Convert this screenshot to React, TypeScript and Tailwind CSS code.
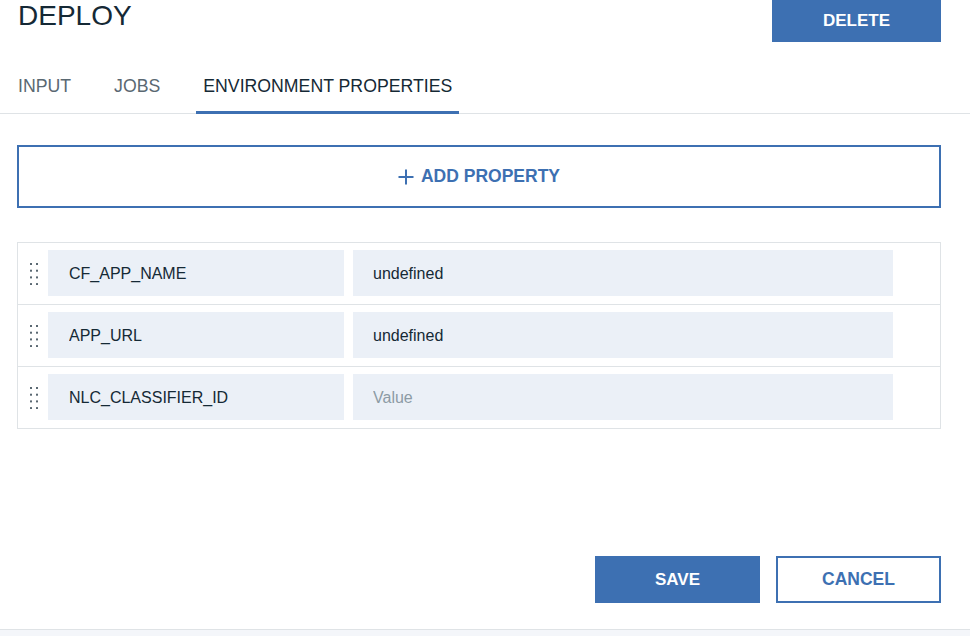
const PROPERTIES = [
  { name: "CF_APP_NAME", value: "undefined" },
  { name: "APP_URL", value: "undefined" },
  { name: "NLC_CLASSIFIER_ID", value: "" },
];

const TABS = ["INPUT", "JOBS", "ENVIRONMENT PROPERTIES"];

function DragHandle() {
  return (
    <svg width="10" height="24" viewBox="0 0 10 24" className="shrink-0">
      {[0, 1, 2, 3].map((r) =>
        [0, 1].map((c) => (
          <rect key={`${r}-${c}`} x={1 + c * 6} y={2 + r * 6.7} width="2" height="2" fill="#5a6872" />
        ))
      )}
    </svg>
  );
}

function PlusIcon() {
  return (
    <svg width="16" height="16" viewBox="0 0 16 16" className="shrink-0">
      <path d="M8 0.5v15M0.5 8h15" stroke="#3d70b2" strokeWidth="2" fill="none" />
    </svg>
  );
}

export default function App() {
  return (
    <div className="relative h-[636px] w-[970px] overflow-hidden bg-white font-['Liberation_Sans',Arial,sans-serif] text-[#152935]">
      <div className="flex items-start justify-between pl-[18px] pr-[29px]">
        <h1 className="text-[28px] leading-[32px] font-normal">DEPLOY</h1>
        <button className="h-[42px] w-[169px] bg-[#3d70b2] text-[17px] font-bold text-white">
          DELETE
        </button>
      </div>

      <div className="flex h-[72px] items-end gap-[29px] border-b border-[#dfe3e6] pl-[11px]">
        {TABS.map((tab) => {
          const active = tab === "ENVIRONMENT PROPERTIES";
          return (
            <div
              key={tab}
              className={
                active
                  ? "-mb-px border-b-[3px] border-[#3d70b2] px-[7px] pb-[13px] text-[17.7px] leading-[24px] text-[#152935]"
                  : "-mb-px border-b-[3px] border-transparent px-[7px] pb-[13px] text-[17.7px] leading-[24px] text-[#5a6872]"
              }
            >
              {tab}
            </div>
          );
        })}
      </div>

      <div className="px-[17px] pr-[29px]">
        <button className="mt-[31px] flex h-[63px] w-full items-center justify-center gap-[7px] border-2 border-[#3d70b2] text-[17.5px] font-bold text-[#3d70b2]">
          <PlusIcon />
          <span>ADD PROPERTY</span>
        </button>

        <div className="mt-[34px] divide-y divide-[#dfe3e6] border border-[#dfe3e6]">
          {PROPERTIES.map((p) => (
            <div key={p.name} className="flex items-center pt-[7px] pb-[8px]">
              <div className="flex w-[30px] justify-center pl-px">
                <DragHandle />
              </div>
              <input
                readOnly
                value={p.name}
                className="h-[46px] w-[296px] bg-[#ebf0f7] px-[21px] pt-[2px] text-[16px] text-[#152935] outline-none"
              />
              <input
                readOnly
                value={p.value}
                placeholder="Value"
                className="ml-[9px] h-[46px] w-[540px] bg-[#ebf0f7] px-[20px] pt-[2px] text-[16px] text-[#152935] outline-none placeholder:text-[#8c9ba5]"
              />
            </div>
          ))}
        </div>

        <div className="mt-[127px] flex justify-end gap-[16px]">
          <button className="h-[47px] w-[165px] bg-[#3d70b2] text-[17px] font-bold text-white">SAVE</button>
          <button className="h-[47px] w-[165px] border-2 border-[#3d70b2] text-[17.5px] font-bold text-[#3d70b2]">
            CANCEL
          </button>
        </div>
      </div>

      <div className="mt-[26px] h-[20px] border-t border-[#dfe3e6] bg-[#f4f6fa]" />
    </div>
  );
}
